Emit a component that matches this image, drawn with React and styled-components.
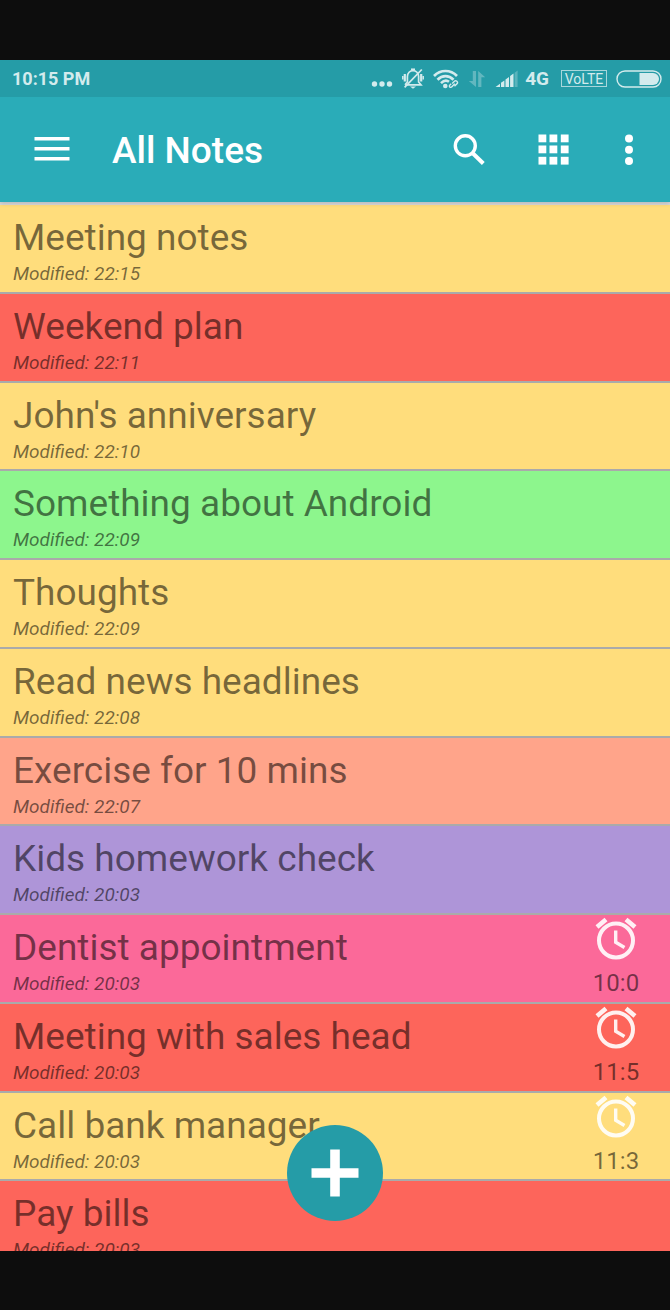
import React from "react";
import styled, { createGlobalStyle } from "styled-components";

const GlobalStyle = createGlobalStyle`
  * { box-sizing: border-box; }
  body { margin: 0; background: #0d0d0d; font-family: Roboto, "Liberation Sans", sans-serif; }
  button { border: 0; padding: 0; background: none; color: inherit; font: inherit; cursor: pointer; }
  h1, h2, p, ul { margin: 0; padding: 0; font-weight: 400; }
  svg { display: block; }
`;

const Stage = styled.div`
  height: 100vh;
  padding: 60px 0 59px;
  background: #0d0d0d;
`;

const Screen = styled.div`
  position: relative;
  display: flex;
  flex-direction: column;
  height: 100%;
  overflow: hidden;
  background: #d8d8d8;
`;

const StatusBar = styled.div`
  position: relative;
  z-index: 2;
  flex: none;
  display: flex;
  align-items: center;
  justify-content: space-between;
  height: 37px;
  padding: 0 8px 0 12px;
  background: #259ca7;
  color: #d3ebed;
  font-size: 18px;
  font-weight: 700;
  line-height: 20px;
`;

const StatusIcons = styled.div`
  display: flex;
  align-items: center;
  gap: 9px;
`;

const NetworkType = styled.span`
  margin: 0 3px 0 -3px;
  font-size: 19px;
`;

const Volte = styled.span`
  width: 46px;
  height: 17px;
  border: 1px solid #a8d7dc;
  font-size: 14px;
  font-weight: 400;
  line-height: 16px;
  text-align: center;
`;

const Toolbar = styled.header`
  position: relative;
  z-index: 1;
  flex: none;
  display: flex;
  align-items: center;
  height: 105px;
  padding: 0 17px 0 28px;
  background: #2aacb8;
  color: #fff;
  box-shadow: 0 1px 5px rgba(0, 0, 0, 0.18);
`;

const IconButton = styled.button`
  display: flex;
  align-items: center;
  justify-content: center;
  width: 48px;
  height: 48px;
`;

const Heading = styled.h1`
  flex: 1;
  padding: 3px 0 0 36px;
  font-size: 37px;
  font-weight: 500;
  line-height: 44px;
`;

const Actions = styled.div`
  display: flex;
  gap: 36px;
  ${IconButton}:last-child { margin-left: -8px; }
`;

const Scroll = styled.main`
  flex: 1;
  min-height: 0;
  margin-top: 3px;
  overflow: hidden;
`;

const NoteList = styled.ul`
  display: grid;
  grid-auto-rows: 1fr;
  height: 1065px;
  list-style: none;
`;

const Note = styled.li`
  display: flex;
  justify-content: space-between;
  padding: 9px 26px 0 13px;
  border-bottom: 2px solid #aaa;
  background: ${(p) => p.$color};
  color: rgba(0, 0, 0, 0.54);
`;

const NoteTitle = styled.h2`
  font-size: 37px;
  line-height: 48px;
  white-space: nowrap;
`;

const Modified = styled.p`
  font-size: 19px;
  font-style: italic;
  line-height: 24px;
`;

const Reminder = styled.div`
  display: flex;
  flex-direction: column;
  align-items: center;
  width: 56px;
  margin-top: -8px;
  font-size: 24px;
  line-height: 30px;
  svg { margin-bottom: 8px; }
`;

const AddButton = styled.button`
  position: absolute;
  z-index: 2;
  bottom: 30px;
  left: 50%;
  display: flex;
  align-items: center;
  justify-content: center;
  width: 96px;
  height: 96px;
  border-radius: 50%;
  background: #259ca7;
  transform: translateX(-50%);
`;

const palette = {
  yellow: "#ffdd7c",
  red: "#fd655b",
  green: "#8df68d",
  salmon: "#ffa48a",
  purple: "#ae95d8",
  pink: "#fb6999",
};

const notes = [
  { title: "Meeting notes", time: "22:15", color: "yellow" },
  { title: "Weekend plan", time: "22:11", color: "red" },
  { title: "John's anniversary", time: "22:10", color: "yellow" },
  { title: "Something about Android", time: "22:09", color: "green" },
  { title: "Thoughts", time: "22:09", color: "yellow" },
  { title: "Read news headlines", time: "22:08", color: "yellow" },
  { title: "Exercise for 10 mins", time: "22:07", color: "salmon" },
  { title: "Kids homework check", time: "20:03", color: "purple" },
  { title: "Dentist appointment", time: "20:03", color: "pink", alarm: "10:0" },
  { title: "Meeting with sales head", time: "20:03", color: "red", alarm: "11:5" },
  { title: "Call bank manager", time: "20:03", color: "yellow", alarm: "11:3" },
  { title: "Pay bills", time: "20:03", color: "red" },
];

const DotsIcon = () => (
  <svg width="22" height="22" viewBox="0 0 22 22" fill="currentColor" aria-hidden="true">
    <circle cx="3.5" cy="16" r="2.7" />
    <circle cx="11" cy="16" r="2.7" />
    <circle cx="18.5" cy="16" r="2.7" />
  </svg>
);

const MutedBellIcon = () => (
  <svg width="22" height="22" viewBox="0 0 22 22" fill="none" stroke="currentColor" strokeWidth="1.7" aria-hidden="true">
    <path d="M3 16.8H19L16.6 14V8.5C16.6 5 14 2.6 11 2.6S5.4 5 5.4 8.5V14L3 16.8" />
    <path d="M19.8 1.5L2.6 19.3" />
    <path d="M9 1.3H13" />
    <path d="M8 18.4H14L11 20.8Z" fill="currentColor" stroke="none" />
    <path d="M2.8 6V13.5M19.2 6V13.5" strokeWidth="2.2" />
    <path d="M0.8 8V11.5M21.2 8V11.5" strokeWidth="1.5" />
  </svg>
);

const WifiIcon = () => (
  <svg width="26" height="20" viewBox="0 0 26 20" fill="none" stroke="currentColor" aria-hidden="true">
    <path d="M1 7C7.5 0.3 17.5 0.3 24 7" strokeWidth="2.7" />
    <path d="M4.5 10.7C9.3 5.8 15.7 5.8 20.5 10.7" strokeWidth="2.7" />
    <path d="M8 14.2C11 11.2 14 11.2 16 12.8" strokeWidth="2.6" />
    <circle cx="12.3" cy="17" r="2.3" fill="currentColor" stroke="none" />
    <path d="M19.2 14.6L21.7 12.1C22.9 11 25.4 13 24.2 14.6L21.5 17.2M21.8 14.7L18.9 17.8C17.4 19.4 15.4 17.4 16.9 15.9L18.2 14.7" strokeWidth="1.4" />
  </svg>
);

const DataIcon = () => (
  <svg width="18" height="18" viewBox="0 0 18 18" fill="currentColor" opacity="0.35" aria-hidden="true">
    <path d="M4.8 1H8V17L0.8 11H4.8ZM10.2 1L17.2 7.2H13.4V17H10.2Z" />
  </svg>
);

const SignalIcon = () => (
  <svg width="24" height="18" viewBox="0 0 24 18" fill="currentColor" aria-hidden="true">
    <path d="M0.5 17L5 13.7V17ZM6 12.8L9.4 10.4V17H6ZM10.5 9.5L14 7.1V17H10.5ZM15.1 6L18.5 3.6V17H15.1Z" />
    <path d="M19.6 2.7L22.6 0.5V17H19.6Z" opacity="0.3" />
  </svg>
);

const BatteryIcon = () => (
  <svg width="46" height="18" viewBox="0 0 46 18" fill="none" aria-hidden="true">
    <rect x="1" y="1" width="44" height="16" rx="8" stroke="currentColor" strokeWidth="1.4" />
    <path d="M23.5 3H37A6 6 0 0 1 37 15H23.5Z" fill="currentColor" />
  </svg>
);

const MenuIcon = () => (
  <svg width="36" height="26" viewBox="0 0 36 26" fill="currentColor" aria-hidden="true">
    <path d="M.5 0H35.5V3.5H.5ZM.5 10H35.5V13.5H.5ZM.5 20H35.5V23.5H.5Z" />
  </svg>
);

const SearchIcon = () => (
  <svg width="32" height="32" viewBox="0 0 32 32" fill="none" stroke="currentColor" aria-hidden="true">
    <circle cx="12.3" cy="11.8" r="10" strokeWidth="3.4" />
    <path d="M20 19.5L30.3 29.5" strokeWidth="4" />
  </svg>
);

const GridIcon = () => (
  <svg width="31" height="31" viewBox="0 0 31 31" fill="currentColor" aria-hidden="true">
    {[0.5, 11.5, 22.8].map((y) =>
      [0.5, 11.5, 22.8].map((x) => <rect key={`${x}-${y}`} x={x} y={y} width="7.8" height="7.8" />)
    )}
  </svg>
);

const MoreIcon = () => (
  <svg width="8" height="32" viewBox="0 0 8 32" fill="currentColor" aria-hidden="true">
    <circle cx="4" cy="4.6" r="4" />
    <circle cx="4" cy="15.8" r="4" />
    <circle cx="4" cy="27" r="4" />
  </svg>
);

const AlarmIcon = () => (
  <svg width="42" height="44" viewBox="0 0 42 44" fill="none" stroke="#fff" strokeOpacity="0.9" aria-hidden="true">
    <circle cx="21" cy="24.5" r="17" strokeWidth="4" />
    <path d="M2 11L11 3.5M31 3.5L40 11" strokeWidth="4.6" />
    <path d="M20.7 14.5V26.2L29.5 31.5" strokeWidth="3.4" />
  </svg>
);

const PlusIcon = () => (
  <svg width="48" height="48" viewBox="0 0 48 48" fill="#fff" aria-hidden="true">
    <path d="M19.2 0.5H28.8V19.2H47.5V28.8H28.8V47.5H19.2V28.8H0.5V19.2H19.2Z" />
  </svg>
);

export default function App() {
  return (
    <Stage>
      <GlobalStyle />
      <Screen>
        <StatusBar>
          <span>10:15 PM</span>
          <StatusIcons>
            <DotsIcon />
            <MutedBellIcon />
            <WifiIcon />
            <DataIcon />
            <SignalIcon />
            <NetworkType>4G</NetworkType>
            <Volte>VoLTE</Volte>
            <BatteryIcon />
          </StatusIcons>
        </StatusBar>
        <Toolbar>
          <IconButton type="button" aria-label="Open menu"><MenuIcon /></IconButton>
          <Heading>All Notes</Heading>
          <Actions>
            <IconButton type="button" aria-label="Search"><SearchIcon /></IconButton>
            <IconButton type="button" aria-label="Grid view"><GridIcon /></IconButton>
            <IconButton type="button" aria-label="More options"><MoreIcon /></IconButton>
          </Actions>
        </Toolbar>
        <Scroll>
          <NoteList>
            {notes.map((note) => (
              <Note key={note.title} $color={palette[note.color]}>
                <div>
                  <NoteTitle>{note.title}</NoteTitle>
                  <Modified>Modified: {note.time}</Modified>
                </div>
                {note.alarm && (
                  <Reminder>
                    <AlarmIcon />
                    <span>{note.alarm}</span>
                  </Reminder>
                )}
              </Note>
            ))}
          </NoteList>
        </Scroll>
        <AddButton type="button" aria-label="Add note"><PlusIcon /></AddButton>
      </Screen>
    </Stage>
  );
}
